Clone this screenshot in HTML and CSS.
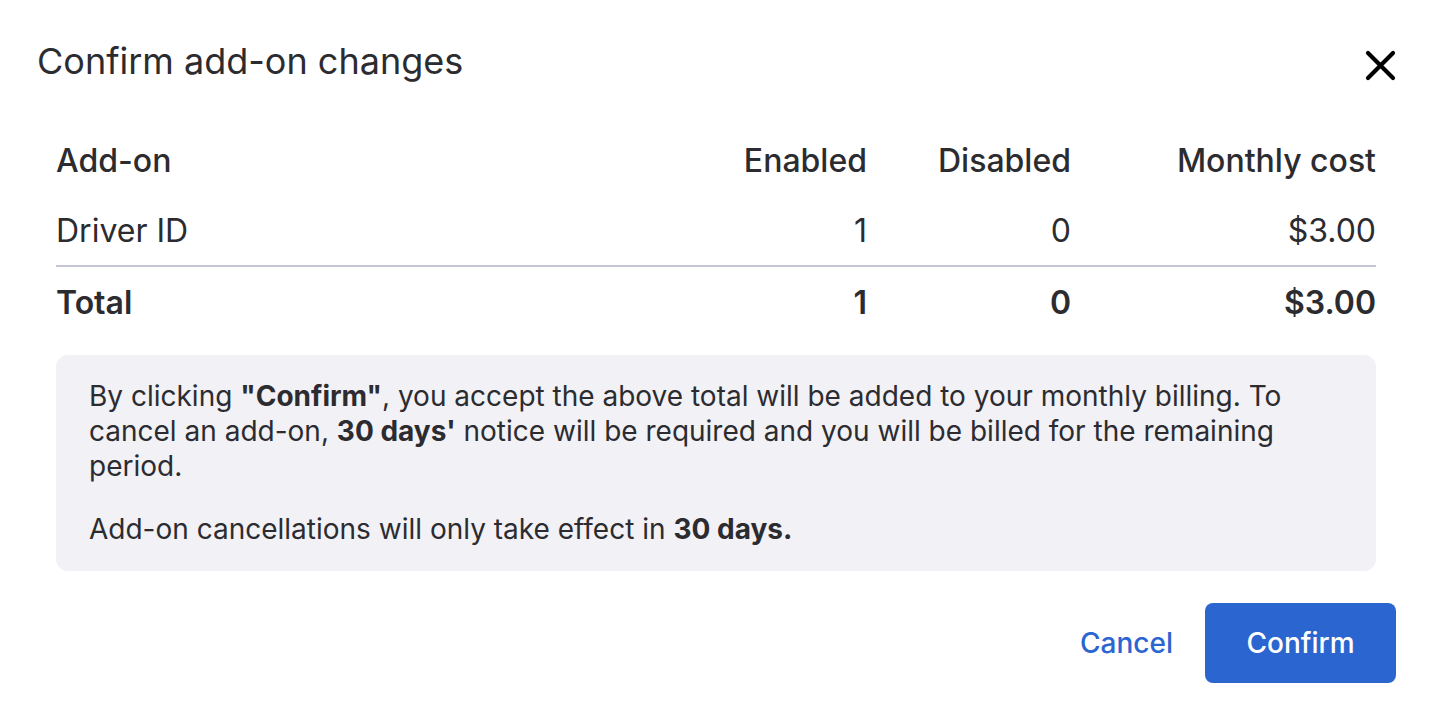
FILE: index.html
```html
<!DOCTYPE html>
<html lang="en">
<head>
<meta charset="utf-8">
<title>Confirm add-on changes</title>
<link rel="stylesheet" href="styles.css">
</head>
<body>
<div class="modal">
  <header class="modal-header">
    <h1 class="modal-title">Confirm add-on changes</h1>
    <button class="close-btn" aria-label="Close">
      <svg width="31" height="31" viewBox="0 0 31 31"><path d="M3 3L28 28M28 3L3 28" stroke="#000" stroke-width="4.2" stroke-linecap="round"/></svg>
    </button>
  </header>
  <div class="modal-body">
    <div class="table">
      <div class="row head">
        <div class="cell">Add-on</div>
        <div class="cell num">Enabled</div>
        <div class="cell num">Disabled</div>
        <div class="cell num">Monthly cost</div>
      </div>
      <div class="row item">
        <div class="cell">Driver ID</div>
        <div class="cell num">1</div>
        <div class="cell num">0</div>
        <div class="cell num">$3.00</div>
      </div>
      <div class="row total">
        <div class="cell">Total</div>
        <div class="cell num">1</div>
        <div class="cell num">0</div>
        <div class="cell num">$3.00</div>
      </div>
    </div>
    <div class="notice">
      <p>By clicking <strong>"Confirm"</strong>, you accept the above total will be added to your monthly billing. To cancel an add-on, <strong>30 days'</strong> notice will be required and you will be billed for the remaining period.</p>
      <p>Add-on cancellations will only take effect in <strong>30 days.</strong></p>
    </div>
  </div>
  <footer class="modal-footer">
    <button class="btn-link">Cancel</button>
    <button class="btn-primary">Confirm</button>
  </footer>
</div>
</body>
</html>
```
FILE: styles.css
```css
* { box-sizing: border-box; }
html, body { margin: 0; background: #fff; }
body {
  font-family: Inter, "Noto Sans", sans-serif;
  color: #2c2c30;
}
.modal {
  width: 1430px;
  padding: 0 34px 0 37px;
}
.modal-header {
  display: flex;
  align-items: flex-start;
  justify-content: space-between;
  height: 124px;
}
.modal-title {
  margin: 0;
  font-size: 36px;
  font-weight: 400;
  line-height: 1;
  padding-top: 43px;
}
.close-btn {
  background: none;
  border: 0;
  padding: 0;
  width: 31px;
  height: 31px;
  margin-top: 50px;
}
.close-btn svg { display: block; }
.modal-body {
  padding: 0 20px 0 19px;
}
.row {
  display: grid;
  grid-template-columns: 1fr 204px 204px 305px;
  align-items: center;
  font-size: 32px;
}
.row.head { height: 72px; font-weight: 500; }
.row.item { height: 71px; border-bottom: 2px solid #c6c7d6; }
.row.total { height: 71px; font-weight: 600; }
.cell.num { text-align: right; }
.notice {
  margin-top: 17px;
  background: #f1f1f6;
  border-radius: 12px;
  padding: 24px 33px 24px 33px;
  font-size: 28px;
  line-height: 35px;
}
.notice p { margin: 0; }
.notice p + p { margin-top: 28px; }
.notice strong { font-weight: 700; }
.modal-footer {
  display: flex;
  justify-content: flex-end;
  align-items: center;
  gap: 32px;
  padding-top: 32px;
}
.btn-link {
  background: none;
  border: 0;
  font-family: inherit;
  font-size: 28px;
  font-weight: 500;
  color: #2b65d0;
  padding: 0;
}
.btn-primary {
  width: 191px;
  height: 80px;
  border: 0;
  border-radius: 8px;
  background: #2b65d0;
  color: #fff;
  font-family: inherit;
  font-size: 28px;
  font-weight: 500;
}
```
